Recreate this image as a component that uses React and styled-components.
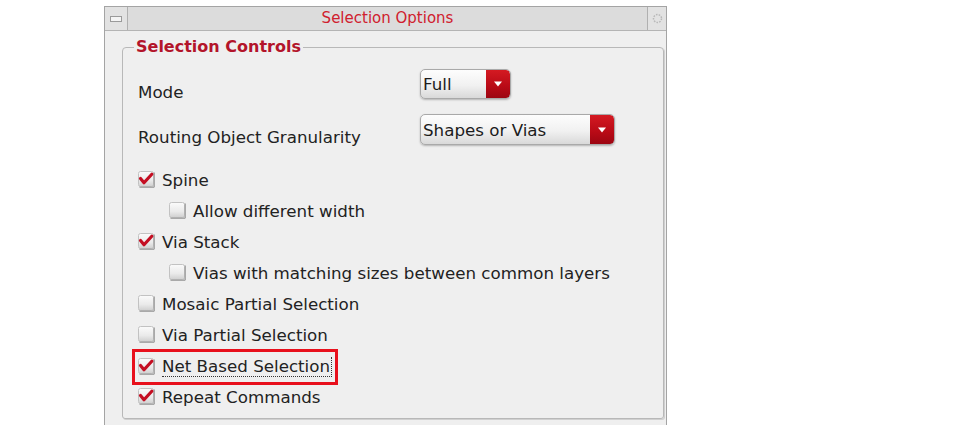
import React from "react";
import styled, { createGlobalStyle } from "styled-components";

const Global = createGlobalStyle`
  html, body { margin: 0; padding: 0; background: #ffffff; }
  body { font-family: "DejaVu Sans", "Liberation Sans", sans-serif; overflow: hidden; }
`;

const Window = styled.div`
  margin: 6px 0 0 104px;
  width: 563px;
  border: 1px solid #a4a4a4;
  border-bottom: none;
  background: #efefef;
  height: 440px;
  box-sizing: border-box;
`;

const TitleBar = styled.div`
  display: grid;
  grid-template-columns: 23px 1fr 19px;
  height: 24px;
  box-sizing: border-box;
  border-bottom: 1px solid #b4b4b4;
  background: #dcdcdc;
`;

const TitleButton = styled.div`
  display: flex;
  align-items: center;
  justify-content: center;
  background: #e2e2e2;
  border-${(p) => p.$side}: 1px solid #b0b0b0;
`;

const Title = styled.div`
  display: flex;
  align-items: center;
  justify-content: center;
  color: #d0202e;
  font-size: 15px;
  padding-bottom: 2px;
`;

const Body = styled.div`
  padding: 7px 2px 0 17px;
`;

const Group = styled.fieldset`
  margin: 0;
  padding: 13px 14px 6px 15px;
  border: 1px solid #b8b8b8;
  border-radius: 4px 4px 3px 3px;
  box-shadow: 1px 1px 0 #d0d0d0;
  min-width: 0;
`;

const Legend = styled.legend`
  margin-left: -4px;
  padding: 0 2px;
  color: #b3142a;
  font-weight: bold;
  font-size: 16px;
  line-height: 18px;
`;

const SelectRow = styled.div`
  display: grid;
  grid-template-columns: 282px auto;
  align-items: start;
  height: ${(p) => p.$h}px;
  margin-top: ${(p) => p.$mt}px;
`;

const Label = styled.span`
  color: #222;
  font-size: 16.7px;
  line-height: 18px;
  padding-top: 14px;
`;

const Dropdown = styled.div`
  display: flex;
  width: ${(p) => p.$w}px;
  height: ${(p) => p.$h}px;
  box-sizing: border-box;
  border: 1px solid #a9a9a9;
  border-radius: 5px;
  overflow: hidden;
  background: linear-gradient(#fdfdfd, #f1f1f1 55%, #d9d9d9);
  box-shadow: 0 1px 2px rgba(0, 0, 0, 0.25);
`;

const DropText = styled.span`
  flex: 1;
  display: flex;
  align-items: center;
  padding-left: 2px;
  font-size: 16.7px;
  color: #1c1c1c;
`;

const DropButton = styled.span`
  width: 24px;
  display: flex;
  align-items: center;
  justify-content: center;
  background: linear-gradient(#d41a22, #b80a16 60%, #9c0612);
  border-radius: 0 4px 4px 0;
`;

const Checks = styled.div`
  display: flex;
  flex-direction: column;
  margin-top: 19px;
`;

const CheckRow = styled.div`
  display: flex;
  align-items: center;
  gap: 7px;
  height: 31px;
  padding-left: ${(p) => (p.$indent ? 31 : 0)}px;
  font-size: 16.7px;
  color: #222;
`;

const Highlight = styled.div`
  display: flex;
  align-items: center;
  gap: 7px;
  margin: 1px 0 -1px -6px;
  padding: 0 3px 0 3px;
  height: 30px;
  border: 3px solid #e8101c;
  width: fit-content;
`;

const FocusText = styled.span`
  border-right: 1px dotted #333;
  border-bottom: 1px dotted #333;
  padding-right: 1px;
  line-height: 19px;
`;

const Box = ({ checked }) => (
  <svg width="17" height="17" viewBox="0 0 17 17" style={{ flex: "none" }}>
    <defs>
      <linearGradient id="cbg" x1="0" y1="0" x2="0" y2="1">
        <stop offset="0" stopColor="#fbfbfb" />
        <stop offset="0.6" stopColor="#eaeaea" />
        <stop offset="1" stopColor="#cfcfcf" />
      </linearGradient>
    </defs>
    <rect x="0.5" y="0.5" width="15" height="15" rx="2" fill="url(#cbg)" stroke="#c2c2c2" />
    <path d="M1.5 16.2 H16.2 V1.5" fill="none" stroke="#8a8a8a" strokeWidth="1" />
    {checked && (
      <path
        d="M2.5 7.5 L6 11.8 L13.8 3.2"
        fill="none"
        stroke="#c40e22"
        strokeWidth="3.2"
        strokeLinecap="round"
        strokeLinejoin="round"
      />
    )}
  </svg>
);

const Arrow = () => (
  <svg width="10" height="6" viewBox="0 0 10 6">
    <path d="M1 0.5 H9 L5 5.5 Z" fill="#fff" />
  </svg>
);

const Select = ({ value, w, h }) => (
  <Dropdown $w={w} $h={h}>
    <DropText>{value}</DropText>
    <DropButton>
      <Arrow />
    </DropButton>
  </Dropdown>
);

const Check = ({ label, checked, indent }) => (
  <CheckRow $indent={indent}>
    <Box checked={checked} />
    <span>{label}</span>
  </CheckRow>
);

export default function App() {
  return (
    <>
      <Global />
      <Window>
        <TitleBar>
          <TitleButton $side="right">
            <svg width="12" height="6" viewBox="0 0 12 6">
              <rect x="0.5" y="0.5" width="11" height="5" fill="#f4f4f4" stroke="#9a9a9a" />
            </svg>
          </TitleButton>
          <Title>Selection Options</Title>
          <TitleButton $side="left">
            <svg width="11" height="11" viewBox="0 0 11 11">
              <circle cx="5.5" cy="5.5" r="4" fill="none" stroke="#b8b8b8" strokeWidth="1.5" strokeDasharray="1.6 1.2" />
            </svg>
          </TitleButton>
        </TitleBar>
        <Body>
          <Group>
            <Legend>Selection Controls</Legend>
            <SelectRow $h={30} $mt={0}>
              <Label>Mode</Label>
              <Select value="Full" w={91} h={30} />
            </SelectRow>
            <SelectRow $h={31} $mt={15}>
              <Label>Routing Object Granularity</Label>
              <Select value="Shapes or Vias" w={195} h={31} />
            </SelectRow>
            <Checks>
              <Check label="Spine" checked />
              <Check label="Allow different width" indent />
              <Check label="Via Stack" checked />
              <Check label="Vias with matching sizes between common layers" indent />
              <Check label="Mosaic Partial Selection" />
              <Check label="Via Partial Selection" />
              <CheckRow>
                <Highlight>
                  <Box checked />
                  <FocusText>Net Based Selection</FocusText>
                </Highlight>
              </CheckRow>
              <Check label="Repeat Commands" checked />
            </Checks>
          </Group>
        </Body>
      </Window>
    </>
  );
}
